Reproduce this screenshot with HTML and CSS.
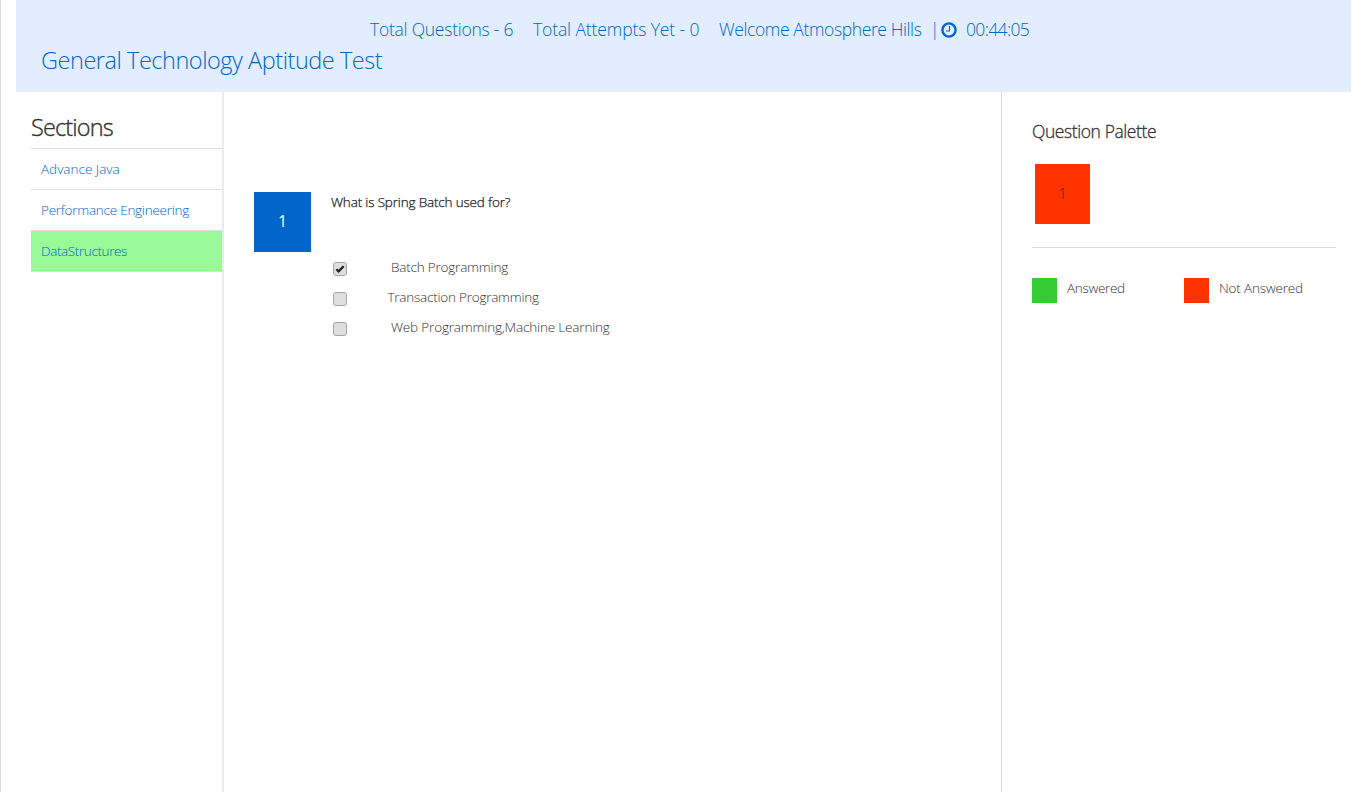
FILE: index.html
```html
<!DOCTYPE html>
<html lang="en">
<head>
<meta charset="utf-8">
<title>General Technology Aptitude Test</title>
<link rel="stylesheet" href="styles.css">
</head>
<body>
<div class="page">
  <header class="header">
    <div class="status">
      <span class="status-questions">Total Questions - 6</span>
      <span class="status-attempts">Total Attempts Yet - 0</span>
      <span class="status-user">Welcome Atmosphere Hills</span>
      <span class="status-divider">|</span>
      <svg class="clock" viewBox="0 0 16 16" width="16" height="16" fill="none" stroke="currentColor">
        <circle cx="8" cy="8" r="6.6" stroke-width="2.4"/>
        <path d="M8.5 4v5H5" stroke-width="1.1"/>
      </svg>
      <span class="status-time">00:44:05</span>
    </div>
    <h1 class="title">General Technology Aptitude Test</h1>
  </header>
  <div class="columns">
    <nav class="sections">
      <h2 class="sections-title">Sections</h2>
      <ul class="section-list">
        <li class="section"><a class="link-java">Advance Java</a></li>
        <li class="section"><a class="link-perf">Performance Engineering</a></li>
        <li class="section section-active"><a class="link-data">DataStructures</a></li>
      </ul>
    </nav>
    <main class="question">
      <div class="question-number">1</div>
      <div class="question-body">
        <p class="question-text">What is Spring Batch used for?</p>
        <label class="option">
          <svg class="box" viewBox="0 0 14 14" width="14" height="14"><rect class="box-shape" x=".5" y=".5" width="13" height="13" rx="2.5"/><path class="box-tick" d="M3.4 7.2l2.2 2.2 5-5.2"/></svg>
          <span class="option-batch">Batch Programming</span>
        </label>
        <label class="option">
          <svg class="box" viewBox="0 0 14 14" width="14" height="14"><rect class="box-shape" x=".5" y=".5" width="13" height="13" rx="2.5"/></svg>
          <span class="option-trans">Transaction Programming</span>
        </label>
        <label class="option">
          <svg class="box" viewBox="0 0 14 14" width="14" height="14"><rect class="box-shape" x=".5" y=".5" width="13" height="13" rx="2.5"/></svg>
          <span class="option-web">Web Programming,Machine Learning</span>
        </label>
      </div>
    </main>
    <aside class="palette">
      <h3 class="palette-title">Question Palette</h3>
      <div class="palette-grid"><div class="palette-item">1</div></div>
      <div class="legend">
        <div class="legend-entry"><i class="swatch swatch-answered"></i><span class="legend-yes">Answered</span></div>
        <div class="legend-entry"><i class="swatch swatch-open"></i><span class="legend-no">Not Answered</span></div>
      </div>
    </aside>
  </div>
</div>
</body>
</html>
```
FILE: styles.css
```css
* { box-sizing: border-box; }
html, body { height: 100%; }
body {
  margin: 0;
  background: #fff;
  color: #333;
  font: 300 13.5px/20px "Open Sans", "Noto Sans", sans-serif;
  overflow: hidden;
}
h1, h2, h3, p, ul { margin: 0; padding: 0; font-weight: 300; }
.page {
  display: flex;
  flex-direction: column;
  height: 792px;
  padding: 0 15px;
  border-left: 1px solid #ddd;
}
.header { height: 92px; background: #e2eeff; color: #0066cc; padding: 16px 25px 0; }
.status {
  display: flex;
  align-items: center;
  height: 26px;
  padding-left: 329px;
  font-size: 17.5px;
  white-space: nowrap;
}
.status-questions { width: 163px; letter-spacing: -.24px; }
.status-attempts { width: 186px; letter-spacing: -.11px; }
.status-user { width: 211px; letter-spacing: -.38px; }
.status-divider { width: 11px; }
.status-time { letter-spacing: -.65px; }
.clock { margin: 1px 9px 0 0; }
.title { font-size: 23.5px; line-height: 36px; letter-spacing: -.46px; white-space: nowrap; }
.columns { flex: 1; display: flex; }
.sections { width: 208px; padding: 18px 0 0 15px; border-right: 2px solid #ececec; }
.sections-title {
  height: 38px;
  font-size: 23.5px;
  line-height: 34px;
  letter-spacing: -.85px;
  -webkit-text-stroke: .35px #333;
}
.section-list { list-style: none; border-top: 1px solid #ddd; }
.section {
  height: 41px;
  padding: 10px 10px 0;
  border-bottom: 1px solid #ddd;
  color: #0066cc;
  white-space: nowrap;
}
.section-active { background: #98fb98; }
.link-perf { letter-spacing: -.25px; }
.link-data { letter-spacing: -.38px; }
.question { flex: 1; display: flex; align-items: flex-start; padding: 100px 30px 0; }
.question-number {
  width: 57px;
  height: 60px;
  margin-right: 20px;
  background: #0066cc;
  color: #fff;
  font-size: 16px;
  font-weight: 400;
  line-height: 59px;
  text-align: center;
}
.question-text {
  height: 61px;
  color: #222;
  letter-spacing: -.17px;
  -webkit-text-stroke: .25px #222;
}
.option { display: flex; height: 30px; padding: 4px 0 0 2px; white-space: nowrap; }
.box { margin: 5px 44px 0 0; }
.option-batch { letter-spacing: -.2px; }
.option-trans { margin-left: -3.5px; letter-spacing: -.23px; }
.option-web { letter-spacing: -.17px; }
.box-shape { fill: #dedede; stroke: #a6a6a6; }
.box-tick { fill: none; stroke: #222; stroke-width: 2.3; }
.palette { width: 350px; padding: 27px 15px 0 30px; border-left: 1px solid #ddd; }
.palette-title {
  height: 45px;
  font-size: 17.5px;
  line-height: 25px;
  letter-spacing: -.42px;
  -webkit-text-stroke: .3px #333;
}
.palette-grid { height: 84px; padding-left: 3px; border-bottom: 1px solid #ddd; }
.palette-item { width: 55px; height: 60px; background: #ff3300; font-size: 14px; line-height: 60px; text-align: center; }
.legend { display: flex; padding-top: 30px; }
.legend-entry { display: flex; width: 152px; line-height: 21px; }
.legend-yes { letter-spacing: -.3px; }
.legend-no { letter-spacing: -.16px; }
.swatch { width: 25px; height: 25px; margin-right: 10px; }
.swatch-answered { background: #33cc33; }
.swatch-open { background: #ff3300; }
```
